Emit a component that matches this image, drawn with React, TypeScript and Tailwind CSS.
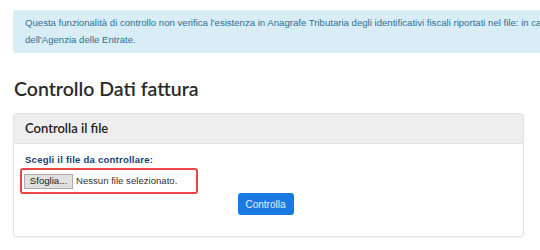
export default function App() {
  return (
    <div className="w-[540px] h-[250px] overflow-hidden bg-white font-['Liberation_Sans',Arial,sans-serif]">
      {/* info alert, wider than the viewport */}
      <div className="ml-[13px] mt-[10px] w-[760px] h-[43px] rounded-[3px] bg-[#d9edf7] pl-3 pt-[4px] text-[9.6px] leading-[17px] text-[#31708f]">
        <div className="whitespace-nowrap">
          Questa funzionalità di controllo non verifica l'esistenza in Anagrafe Tributaria degli identificativi fiscali riportati nel file: in caso di dubbi utilizzare i servizi
        </div>
        <div>dell'Agenzia delle Entrate.</div>
      </div>

      <h1 className="ml-[14px] mt-[22px] text-[19.5px] leading-[28px] font-semibold text-[#2b2b2b] font-['Lato',sans-serif]">
        Controllo Dati fattura
      </h1>

      {/* panel */}
      <div className="ml-[13px] mt-[10px] w-[511px] h-[124px] rounded-[3px] border border-[#e3e3e3] shadow-[0_1px_1px_rgba(0,0,0,0.05)]">
        <div className="h-[30px] bg-[#eeeeee] border-b border-[#e3e3e3] pl-[11px] flex items-center text-[13px] font-semibold text-[#222] font-['Lato',sans-serif]">
          Controlla il file
        </div>
        <div className="pl-[6px] pt-[9px]">
          <div className="pl-[5px] text-[9.6px] leading-[14px] font-bold tracking-[0.2px] text-[#1c3f73]">
            Scegli il file da controllare:
          </div>
          <div className="mt-[1px] w-[178px] h-[26px] rounded-[3px] border-2 border-[#ef4444] flex items-center pl-[2px] gap-[3px] whitespace-nowrap">
            <span className="h-[15px] w-[49px] flex items-center justify-center bg-[#e1e1e1] border border-[#adadad] text-[9.6px] text-[#222]">
              Sfoglia...
            </span>
            <span className="text-[9.6px] text-[#333]">Nessun file selezionato.</span>
          </div>
          <div className="flex justify-center pr-[12px] -mt-[1px]">
            <button className="h-[22px] w-[56px] rounded-[3px] bg-[#1a7ae2] text-[10px] text-[#e6f0fc]">
              Controlla
            </button>
          </div>
        </div>
      </div>
    </div>
  );
}
